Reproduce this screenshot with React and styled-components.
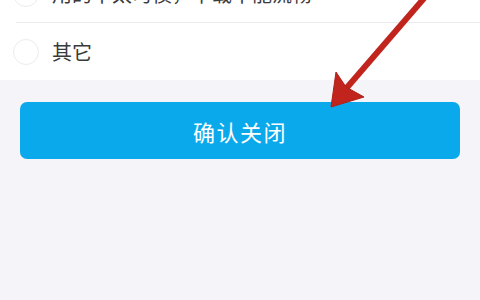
import React from "react";
import styled, { createGlobalStyle } from "styled-components";

const Global = createGlobalStyle`
  html, body { margin: 0; padding: 0; background: #f4f4f9; }
  body { font-family: "Noto Sans CJK SC", "Noto Sans", sans-serif; overflow: hidden; }
`;

const Page = styled.div`
  position: relative;
  width: 480px;
  height: 300px;
  overflow: hidden;
  background: #f4f4f9;
`;

const List = styled.div`
  margin-top: -35px;
  background: #ffffff;
`;

const Row = styled.div`
  display: flex;
  align-items: center;
  height: 57px;
  padding-left: 13px;
  box-sizing: border-box;
`;

const Divider = styled.div`
  height: 1px;
  margin-left: 16px;
  background: #ededf0;
`;

const Radio = styled.span`
  width: 26px;
  height: 26px;
  border-radius: 50%;
  border: 1px solid #ececec;
  box-sizing: border-box;
  flex: none;
`;

const Label = styled.span`
  margin-left: 13px;
  font-size: 20px;
  color: #3a3a3a;
  white-space: nowrap;
`;

const Footer = styled.div`
  padding: 22px 20px 0;
`;

const Button = styled.button`
  width: 440px;
  height: 57px;
  border: none;
  border-radius: 7px;
  background: #0aa9eb;
  color: #ffffff;
  font-family: "Noto Sans CJK SC", "Noto Sans", sans-serif;
  font-size: 22px;
  letter-spacing: 1.5px;
  display: flex;
  align-items: center;
  justify-content: center;
  padding: 0;
`;

const ArrowLayer = styled.svg`
  position: absolute;
  left: 0;
  top: 0;
  pointer-events: none;
`;

export default function App() {
  return (
    <Page>
      <Global />
      <List>
        <Row>
          <Radio />
          <Label>用的不太习惯，下载不能流畅</Label>
        </Row>
        <Divider />
        <Row>
          <Radio />
          <Label>其它</Label>
        </Row>
      </List>
      <Footer>
        <Button>确认关闭</Button>
      </Footer>
      <ArrowLayer width="480" height="300" viewBox="0 0 480 300">
        <line x1="426" y1="-4" x2="344" y2="91" stroke="#c0241c" strokeWidth="6" strokeLinecap="butt" />
        <path d="M331 107 L336 72 L346 87 L364 97 Z" fill="#c0241c" stroke="#b0201a" strokeWidth="1" strokeLinejoin="round" />
      </ArrowLayer>
    </Page>
  );
}
